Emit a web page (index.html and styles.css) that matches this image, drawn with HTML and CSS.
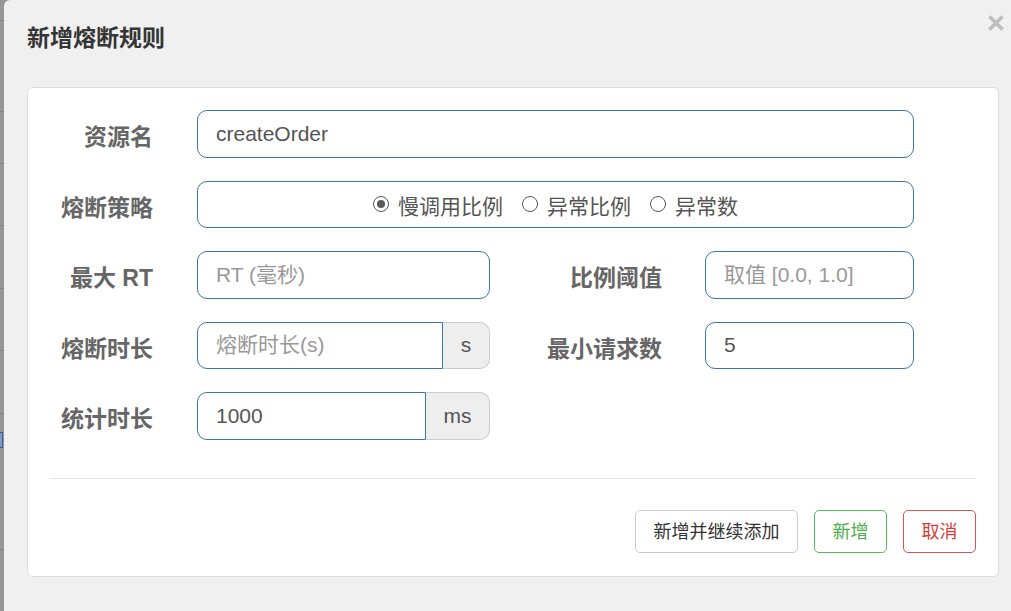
FILE: index.html
```html
<!DOCTYPE html>
<html lang="zh-CN">
<head>
<meta charset="utf-8">
<title>新增熔断规则</title>
<link rel="stylesheet" href="styles.css">
</head>
<body>
<div class="page">
  <div class="strip">
    <div class="seg s1"></div>
    <div class="seg s2"></div>
    <div class="seg s3"></div>
    <div class="seg s4"></div>
    <div class="seg s5"></div>
    <div class="seg s6"></div>
    <div class="seg s7"></div>
    <div class="seg s8"><span class="bracket"></span></div>
  </div>
  <div class="modal">
    <div class="modal-header">
      <h4 class="modal-title">新增熔断规则</h4>
      <button class="close" type="button" aria-label="关闭">
        <svg width="16" height="16" viewBox="0 0 16 16"><path d="M1.5 1.5 L14.5 14.5 M14.5 1.5 L1.5 14.5" stroke="#bdbdbd" stroke-width="3.6" fill="none"/></svg>
      </button>
    </div>
    <div class="card">
      <div class="row">
        <label class="label">资源名</label>
        <input class="control wide" type="text" value="createOrder">
      </div>
      <div class="row">
        <label class="label">熔断策略</label>
        <div class="control wide radios">
          <span class="radio-item"><span class="radio checked"></span>慢调用比例</span>
          <span class="radio-item"><span class="radio"></span>异常比例</span>
          <span class="radio-item"><span class="radio"></span>异常数</span>
        </div>
      </div>
      <div class="row">
        <label class="label">最大 RT</label>
        <input class="control w293" type="text" placeholder="RT (毫秒)">
        <label class="label l2">比例阈值</label>
        <input class="control w209" type="text" placeholder="取值 [0.0, 1.0]">
      </div>
      <div class="row">
        <label class="label">熔断时长</label>
        <div class="group w293">
          <input class="control grouped" type="text" placeholder="熔断时长(s)">
          <span class="addon a47">s</span>
        </div>
        <label class="label l2">最小请求数</label>
        <input class="control w209" type="text" value="5">
      </div>
      <div class="row">
        <label class="label">统计时长</label>
        <div class="group w293">
          <input class="control grouped" type="text" value="1000">
          <span class="addon a64">ms</span>
        </div>
      </div>
      <div class="divider"></div>
      <div class="actions">
        <button class="btn btn-default" type="button">新增并继续添加</button>
        <button class="btn btn-success" type="button">新增</button>
        <button class="btn btn-danger" type="button">取消</button>
      </div>
    </div>
  </div>
</div>
</body>
</html>
```

FILE: styles.css
```css
html, body {
  margin: 0;
  padding: 0;
}
body {
  width: 1011px;
  height: 611px;
  overflow: hidden;
  background: #f0f0f0;
  font-family: "Liberation Sans", "Noto Sans CJK SC", sans-serif;
  color: #555;
}
.page {
  display: flex;
  height: 611px;
  background: #969696;
}
.strip {
  width: 4px;
  flex: none;
  display: flex;
  flex-direction: column;
}
.seg {
  border-bottom: 1px solid #848484;
  flex: none;
}
.s1 { height: 20px; }
.s2 { height: 90px; }
.s3 { height: 51px; }
.s4 { height: 61px; }
.s5 { height: 62px; }
.s6 { height: 61px; }
.s7 { height: 62px; }
.s8 { height: 136px; box-sizing: border-box; padding-top: 18px; }
.bracket {
  display: block;
  width: 2px;
  height: 14px;
  border: 1px solid #3f5f8f;
  border-left: none;
  background: #7f9cc4;
}
.modal {
  flex: 1;
  background: #f0f0f0;
  border-top-left-radius: 6px;
  padding-left: 23px;
  min-width: 0;
}
.modal-header {
  height: 87px;
  display: flex;
  justify-content: space-between;
  align-items: flex-start;
  padding-right: 7px;
  box-sizing: border-box;
}
.modal-title {
  margin: 25px 0 0 0;
  font-size: 23px;
  line-height: 1.2;
  font-weight: 700;
  color: #353535;
}
.close {
  margin-top: 15px;
  padding: 0;
  border: none;
  background: none;
  width: 16px;
  height: 16px;
  display: block;
}
.close svg { display: block; }
.card {
  width: 972px;
  box-sizing: border-box;
  background: #fff;
  border: 1px solid #dcdcdc;
  border-radius: 6px;
  padding: 22px 0 23px 0;
}
.row {
  display: flex;
  align-items: center;
  height: 47.5px;
  margin-bottom: 23px;
}
.row:last-of-type { margin-bottom: 0; }
.label {
  width: 125px;
  margin-right: 44px;
  text-align: right;
  font-size: 23px;
  font-weight: 700;
  color: #666;
  padding-top: 3px;
  flex: none;
}
.label.l2 {
  width: 172px;
  margin-right: 43px;
}
.control {
  height: 47.5px;
  box-sizing: border-box;
  border: 1px solid #3b73b3;
  border-radius: 10px;
  padding: 0 18px;
  font-family: inherit;
  font-size: 21px;
  color: #555;
  background: #fff;
  outline: none;
  margin: 0;
  flex: none;
}
.control::placeholder { color: #999; }
.wide { width: 717px; }
.w293 { width: 293px; }
.w209 { width: 209px; }
.radios {
  display: flex;
  align-items: center;
  justify-content: center;
  gap: 19px;
  padding-top: 2px;
}
.radio-item {
  display: inline-flex;
  align-items: center;
  gap: 9px;
  font-size: 21px;
  color: #555;
}
.radio {
  width: 16px;
  height: 16px;
  box-sizing: border-box;
  border: 1px solid #5a5a5a;
  border-radius: 50%;
  display: inline-flex;
  align-items: center;
  justify-content: center;
  margin-top: -3px;
}
.radio.checked {
  border-color: #555;
}
.radio.checked::after {
  content: "";
  width: 8px;
  height: 8px;
  border-radius: 50%;
  background: #5a5a5a;
}
.group {
  display: flex;
  flex: none;
}
.grouped {
  flex: 1;
  min-width: 0;
  width: auto;
  border-top-right-radius: 0;
  border-bottom-right-radius: 0;
}
.addon {
  flex: none;
  height: 47.5px;
  box-sizing: border-box;
  background: #eee;
  border: 1px solid #ccc;
  border-left: none;
  border-radius: 0 10px 10px 0;
  display: flex;
  align-items: center;
  justify-content: center;
  font-size: 21px;
  color: #555;
}
.a47 { width: 47px; }
.a64 { width: 64px; }
.divider {
  margin: 38.5px 22px 31px 22px;
  border-top: 1px solid #e5e5e5;
}
.actions {
  display: flex;
  justify-content: flex-end;
  gap: 16px;
  padding-right: 22px;
}
.btn {
  height: 43px;
  box-sizing: border-box;
  padding: 0 17.5px 3px;
  font-family: inherit;
  font-size: 18px;
  border-radius: 5px;
  background: #fff;
  border: 1px solid #ccc;
  color: #333;
  margin: 0;
}
.btn-success {
  border-color: #5cb85c;
  color: #4cae4c;
}
.btn-danger {
  border-color: #d9534f;
  color: #d43f3a;
}
```
